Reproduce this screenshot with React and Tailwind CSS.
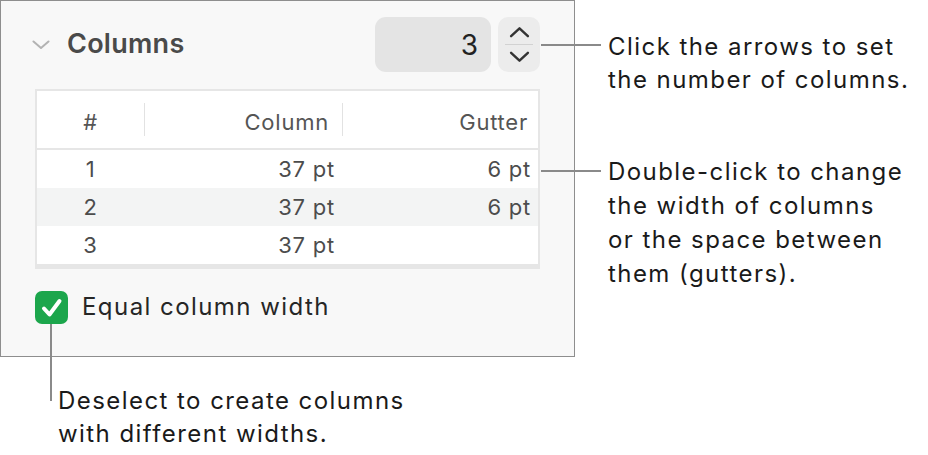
import React from 'react';

const rows = [
  { n: '1', col: '37 pt', gut: '6 pt' },
  { n: '2', col: '37 pt', gut: '6 pt' },
  { n: '3', col: '37 pt', gut: '' },
];

const Chevron = ({ dir = 'down', className = '', width = 2.4 }) => (
  <svg viewBox="0 0 20 12" className={className} fill="none" stroke="currentColor" strokeWidth={width} strokeLinecap="round" strokeLinejoin="round">
    {dir === 'down' ? <path d="M2 2.5l8 7.5 8-7.5" /> : <path d="M2 9.5l8-7.5 8 7.5" />}
  </svg>
);

const App = () => {
  return (
    <div className="relative w-[928px] h-[455px] bg-white font-['Inter',sans-serif] text-[#1a1a1a] overflow-hidden">
      <div className="flex">
        {/* Inspector panel */}
        <div className="w-[575px] h-[357px] shrink-0 border border-[#8e8e8e] bg-[#f8f8f8] pt-[16px] px-[34px]">
          <div className="flex items-center h-[55px]">
            <svg viewBox="0 0 18 9" className="w-[18px] h-[9px] -ml-[3px] text-[#b3b3b3]" fill="none" stroke="currentColor" strokeWidth="2" strokeLinecap="round" strokeLinejoin="round">
              <path d="M1.5 1.5l7.5 6.5 7.5-6.5" />
            </svg>
            <span className="ml-[17px] text-[27px] font-semibold text-[#4a4a4a] tracking-[0.01em]">Columns</span>
            <div className="ml-auto w-[116px] h-[55px] rounded-[11px] bg-[#e4e4e4] flex items-center justify-end pr-[13px] text-[28px] text-[#222]">3</div>
            <div className="ml-[7px] w-[42px] h-[55px] rounded-[10px] bg-[#ececec] flex flex-col items-center justify-center">
              <Chevron dir="up" width={2.3} className="w-[21px] h-[13px] text-[#333]" />
              <div className="w-[28px] h-px bg-[#d2d2d2] my-[5px]" />
              <Chevron dir="down" width={2.3} className="w-[21px] h-[13px] text-[#333]" />
            </div>
          </div>

          {/* Table */}
          <div className="mt-[17px] border-2 border-b-[5px] border-[#e6e6e6] bg-white text-[22px] tracking-[0.035em]">
            <div className="flex items-center h-[59px] border-b-2 border-[#e6e6e6] text-[#555]">
              <div className="w-[107px] text-center pt-[6px]">#</div>
              <div className="w-px h-[33px] bg-[#e2e2e2]" />
              <div className="w-[197px] text-right pr-[13px] pt-[6px]">Column</div>
              <div className="w-px h-[33px] bg-[#e2e2e2]" />
              <div className="flex-1 text-right pr-[10px] pt-[6px]">Gutter</div>
            </div>
            {rows.map((r, i) => (
              <div key={r.n} className={`flex items-center h-[38px] text-[#4c4c4c] ${i === 1 ? 'bg-[#f3f4f4]' : 'bg-white'}`}>
                <div className="w-[107px] text-center">{r.n}</div>
                <div className="w-[199px] text-right pr-[8px]">{r.col}</div>
                <div className="flex-1 text-right pr-[7px]">{r.gut}</div>
              </div>
            ))}
          </div>

          <div className="mt-[20px] flex items-center">
            <div className="w-[33px] h-[33px] rounded-[7px] bg-[#1ca64c] flex items-center justify-center">
              <svg viewBox="0 0 33 33" className="w-[33px] h-[33px]" fill="none" stroke="white" strokeWidth="4" strokeLinecap="round" strokeLinejoin="round">
                <path d="M9 17.5l5.5 6L24.5 10" />
              </svg>
            </div>
            <span className="ml-[14px] text-[24px] text-[#262626] tracking-[0.06em]">Equal column width</span>
          </div>
        </div>

        {/* Right callouts */}
        <div className="pl-[33px] text-[24px] leading-[33px] tracking-[0.06em]">
          <p className="mt-[30px]">Click the arrows to set<br />the number of columns.</p>
          <p className="mt-[59px] leading-[34px]">Double-click to change<br />the width of columns<br />or the space between<br />them (gutters).</p>
        </div>
      </div>

      {/* Bottom callout */}
      <p className="pl-[58px] mt-[27px] text-[24px] leading-[33px] tracking-[0.06em]">Deselect to create columns<br />with different widths.</p>

      {/* Connector lines */}
      <div className="absolute left-[541px] top-[44px] w-[60px] h-[2px] bg-[#8a8a8a]" />
      <div className="absolute left-[541px] top-[170px] w-[60px] h-[2px] bg-[#8a8a8a]" />
      <div className="absolute left-[50px] top-[324px] w-[2px] h-[77px] bg-[#8a8a8a]" />
    </div>
  );
};

export default App;
